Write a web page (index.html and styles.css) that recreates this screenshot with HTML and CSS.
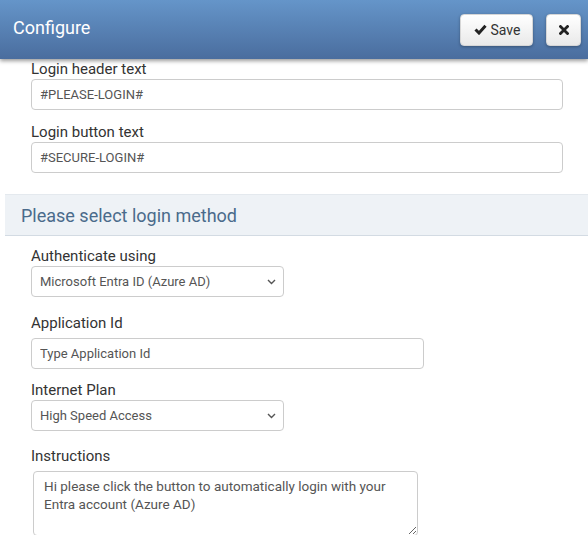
FILE: index.html
```html
<!DOCTYPE html>
<html>
<head>
<meta charset="utf-8">
<link rel="stylesheet" href="styles.css">
</head>
<body>
<header class="topbar">
  <h1 class="title">Configure</h1>
  <div class="actions">
    <button class="btn btn-save" type="button">
      <svg class="ico-check" width="13" height="11" viewBox="0 0 13 11"><polyline points="1.5,5.5 5,9 11.5,1.8" fill="none" stroke="#222" stroke-width="3" stroke-linejoin="miter"/></svg>
      <span>Save</span>
    </button>
    <button class="btn btn-close" type="button" aria-label="Close">
      <svg width="10" height="10" viewBox="0 0 10 10"><path d="M1.5 1.5 L8.5 8.5 M8.5 1.5 L1.5 8.5" stroke="#222" stroke-width="2.8" stroke-linecap="square"/></svg>
    </button>
  </div>
</header>
<main class="content">
  <div class="group">
    <div class="field">
      <label class="lbl">Login header text</label>
      <input class="ctl wide" type="text" value="#PLEASE-LOGIN#">
    </div>
    <div class="field">
      <label class="lbl">Login button text</label>
      <input class="ctl wide" type="text" value="#SECURE-LOGIN#">
    </div>
  </div>
  <div class="band"><h2 class="band-title">Please select login method</h2></div>
  <div class="group group-method">
    <div class="field f-auth">
      <label class="lbl">Authenticate using</label>
      <div class="sel-wrap">
        <select class="ctl sel"><option>Microsoft Entra ID (Azure AD)</option></select>
        <svg class="chev" width="9" height="6" viewBox="0 0 9 6"><polyline points="1,1 4.5,4.5 8,1" fill="none" stroke="#555" stroke-width="1.4"/></svg>
      </div>
    </div>
    <div class="field f-app">
      <label class="lbl lbl-loose">Application Id</label>
      <input class="ctl mid" type="text" placeholder="Type Application Id">
    </div>
    <div class="field f-plan">
      <label class="lbl">Internet Plan</label>
      <div class="sel-wrap">
        <select class="ctl sel"><option>High Speed Access</option></select>
        <svg class="chev" width="9" height="6" viewBox="0 0 9 6"><polyline points="1,1 4.5,4.5 8,1" fill="none" stroke="#555" stroke-width="1.4"/></svg>
      </div>
    </div>
    <div class="field f-instr">
      <label class="lbl lbl-loose">Instructions</label>
      <textarea class="ctl area">Hi please click the button to automatically login with your Entra account (Azure AD)</textarea>
    </div>
  </div>
</main>
</body>
</html>
```
FILE: styles.css
```css
* { box-sizing: border-box; }
html, body { margin: 0; padding: 0; background: #fff; }
body { font-family: Roboto, "Liberation Sans", Arial, sans-serif; color: #333; }

.topbar {
  position: relative;
  z-index: 2;
  height: 59px;
  display: flex;
  align-items: center;
  justify-content: space-between;
  padding: 0 7px 0 13px;
  background: linear-gradient(to bottom, #6595c9, #4a6d9e);
  box-shadow: 0 2px 4px rgba(0,0,0,0.4);
}
.title {
  margin: -5px 0 0 0;
  font-size: 18px;
  font-weight: 400;
  color: #fff;
}
.actions { display: flex; gap: 13px; }
.btn {
  height: 32px;
  border: 1px solid #d6d6d6;
  border-radius: 4px;
  background: linear-gradient(to bottom, #ffffff, #e9e9e9);
  box-shadow: 0 1px 3px rgba(0,0,0,0.3);
  font-family: Roboto, "Liberation Sans", Arial, sans-serif;
  font-size: 14px;
  color: #333;
  display: flex;
  align-items: center;
  justify-content: center;
  padding: 0;
  margin: 0;
}
.btn-save { width: 73px; gap: 4px; padding-left: 1px; }
.btn-close { width: 35px; }

.content {
  height: 476px;
  overflow: hidden;
  padding: 1px 0 0 5px;
}
.group { padding: 0 25px 0 26px; }
.field { margin-bottom: 13px; }
.lbl {
  display: block;
  font-size: 15px;
  line-height: 19px;
  color: #333;
  margin-bottom: 0;
}
.lbl-loose { margin-bottom: 5px; }
.ctl {
  display: block;
  height: 31px;
  border: 1px solid #cccccc;
  border-radius: 4px;
  background: #fff;
  font-family: Roboto, "Liberation Sans", Arial, sans-serif;
  font-size: 13px;
  color: #555;
  padding: 0 8px;
  margin: 0;
  outline: none;
}
.ctl::placeholder { color: #555; opacity: 1; }
.wide { width: 100%; }
.mid { width: 393px; }

.band {
  margin-top: 21px;
  height: 42px;
  background: #eef2f6;
  border-top: 1px solid #e4e9ee;
  border-bottom: 1px solid #d3dbe3;
  display: flex;
  align-items: center;
  padding-left: 16px;
}
.band-title {
  margin: 0;
  font-size: 18px;
  font-weight: 400;
  color: #4a6b8b;
}

.group-method { padding-top: 11px; }
.f-auth { margin-bottom: 17px; }
.f-app { margin-bottom: 12px; }
.f-plan { margin-bottom: 16px; }

.sel-wrap { position: relative; width: 253px; }
.sel {
  width: 253px;
  -webkit-appearance: none;
  appearance: none;
  padding-right: 24px;
}
.chev { position: absolute; right: 8px; top: 13px; pointer-events: none; }

.area {
  width: 385px;
  height: 65px;
  margin-left: 2px;
  padding: 5px 10px;
  font-size: 13.5px;
  line-height: 18px;
  resize: both;
}
```
